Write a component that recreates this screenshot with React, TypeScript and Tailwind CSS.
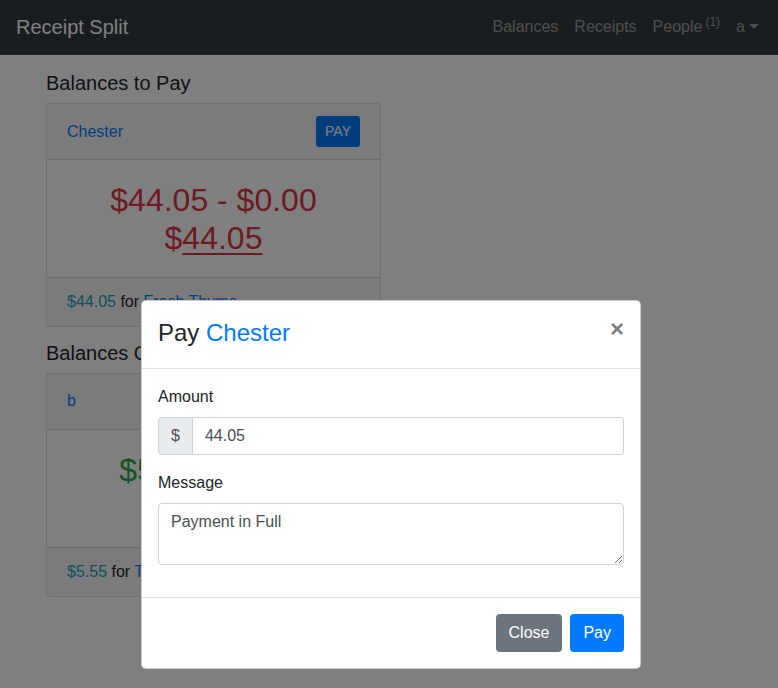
import React from "react";

const font = { fontFamily: '"Liberation Sans", Arial, sans-serif' };

function BalanceCard({
  name,
  color,
  top,
  net,
  amount,
  store,
  showPay,
}: {
  name: string;
  color: string;
  top: string;
  net: string;
  amount: string;
  store: string;
  showPay?: boolean;
}) {
  return (
    <div className="w-[335px] rounded border border-black/[0.125] bg-white">
      <div className="flex items-center justify-between h-[56px] px-5 bg-black/[0.03] border-b border-black/[0.125]">
        <a className="text-[#007bff]">{name}</a>
        {showPay && (
          <button className="h-[31px] px-[9px] rounded-[3px] bg-[#007bff] text-white text-[14px]">PAY</button>
        )}
      </div>
      <div className={`pt-[21px] pb-[19px] px-5 text-center text-[32px] leading-[1.2] ${color}`}>
        <div>{top}</div>
        <div>
          $<span className="underline decoration-[2px] underline-offset-[4px]">{net}</span>
        </div>
      </div>
      <div className="px-5 py-3 bg-black/[0.03] border-t border-black/[0.125]">
        <span className="text-[#17a2b8]">{amount}</span> for <a className="text-[#007bff]">{store}</a>
      </div>
    </div>
  );
}

export default function App() {
  return (
    <div className="relative w-[778px] h-[688px] overflow-hidden bg-white text-[16px] leading-[1.5] text-[#212529]" style={font}>
      {/* Navbar */}
      <nav className="flex items-center h-[55px] pl-4 pr-[11px] pb-[2px] bg-[#343a40]">
        <span className="text-[20px] text-white">Receipt Split</span>
        <div className="ml-auto flex items-center text-white/50">
          <a className="px-2">Balances</a>
          <a className="px-2">Receipts</a>
          <a className="px-2">
            People<sup className="text-[12px] ml-[3px]">(1)</sup>
          </a>
          <a className="px-2 flex items-center">
            a
            <span className="ml-[4px] inline-block w-0 h-0 border-l-[5px] border-r-[5px] border-t-[5px] border-l-transparent border-r-transparent border-t-current" />
          </a>
        </div>
      </nav>

      {/* Content */}
      <div className="px-[46px]">
        <h5 className="mt-4 mb-2 text-[20px] leading-[1.2]">Balances to Pay</h5>
        <BalanceCard
          name="Chester"
          color="text-[#dc3545]"
          top="$44.05 - $0.00"
          net="44.05"
          amount="$44.05"
          store="Fresh Thyme"
          showPay
        />
        <h5 className="mt-[14px] mb-2 text-[20px] leading-[1.2]">Balances Owed</h5>
        <BalanceCard
          name="b"
          color="text-[#28a745]"
          top="$5.55 - $0.00"
          net="5.55"
          amount="$5.55"
          store="Target"
        />
      </div>

      {/* Backdrop */}
      <div className="absolute inset-0 bg-black/50" />

      {/* Modal */}
      <div className="absolute left-[141px] top-[300px] w-[500px] rounded-[5px] border border-black/20 bg-white">
        <div className="flex items-start justify-between px-4 pt-[14px] pb-[17px] border-b border-[#dee2e6]">
          <h4 className="text-[24px] leading-[1.5]">
            Pay <span className="text-[#007bff]">Chester</span>
          </h4>
          <button className="text-[24px] leading-none font-bold text-black/50 pt-[2px]">×</button>
        </div>
        <div className="p-4">
          <div className="mb-4">
            <label className="block mb-2">Amount</label>
            <div className="flex h-[38px]">
              <span className="flex items-center px-3 bg-[#e9ecef] border border-[#ced4da] rounded-l text-[#495057]">$</span>
              <div className="flex-1 flex items-center px-3 border border-l-0 border-[#ced4da] rounded-r text-[#495057]">44.05</div>
            </div>
          </div>
          <div className="mb-4">
            <label className="block mb-2">Message</label>
            <textarea
              rows={2}
              readOnly
              defaultValue="Payment in Full"
              className="block w-full h-[62px] px-3 py-[6px] border border-[#ced4da] rounded text-[#495057] resize-y outline-none"
              style={font}
            />
          </div>
        </div>
        <div className="flex justify-end gap-2 p-4 border-t border-[#dee2e6]">
          <button className="h-[38px] px-[13px] rounded bg-[#6c757d] text-white">Close</button>
          <button className="h-[38px] px-[13px] rounded bg-[#007bff] text-white">Pay</button>
        </div>
      </div>
    </div>
  );
}
